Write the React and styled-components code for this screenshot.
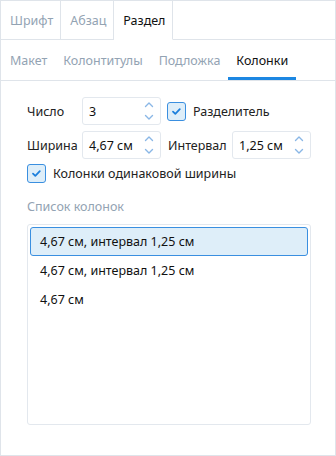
import React from "react";
import styled, { createGlobalStyle } from "styled-components";

const GlobalStyle = createGlobalStyle`
    html, body {
        margin: 0;
        padding: 0;
        background: #ffffff;
    }
    body {
        font-family: "Noto Sans", "Open Sans", sans-serif;
        font-size: 12px;
        color: #1a1a1a;
    }
`

const Frame = styled.div`
    width: 336px;
    height: 456px;
    box-sizing: border-box;
    border: 1px solid #dfe4ea;
    display: flex;
    flex-direction: column;
    background: #fff;
`

const TopTabs = styled.div`
    display: flex;
    height: 39px;
    flex-shrink: 0;
`

const TopTab = styled.div`
    padding: 0 7px 0 9px;
    display: flex;
    align-items: center;
    font-size: 12.5px;
    color: ${(p) => (p.active ? "#111" : "#93a3b3")};
    border-right: 1px solid #dfe4ea;
    border-bottom: 1px solid ${(p) => (p.active ? "transparent" : "#dfe4ea")};
`

const TabFiller = styled.div`
    flex: 1;
    border-bottom: 1px solid #dfe4ea;
`

const SubTabs = styled.div`
    display: flex;
    height: 41px;
    flex-shrink: 0;
    padding-left: 1px;
    border-bottom: 1px solid #dfe4ea;
    box-sizing: border-box;
`

const SubTab = styled.div`
    padding: 3px 8px 0 8px;
    display: flex;
    align-items: center;
    font-size: 12.5px;
    color: ${(p) => (p.active ? "#111" : "#93a3b3")};
    border-bottom: 3px solid ${(p) => (p.active ? "#1c87e2" : "transparent")};
`

const Content = styled.div`
    flex: 1;
    display: flex;
    flex-direction: column;
    padding: 16px 24px 0 26px;
`

const Row = styled.div`
    display: flex;
    align-items: center;
    height: 28px;
    flex-shrink: 0;
    margin-bottom: ${(p) => p.gap || 0}px;
`

const Label = styled.span`
    width: ${(p) => p.width || "auto"};
    font-size: 12.5px;
    color: #222;
    white-space: nowrap;
`

const SpinBox = styled.div`
    width: 79px;
    height: 28px;
    box-sizing: border-box;
    border: 1px solid #e3e8ee;
    border-radius: 3px;
    display: flex;
    align-items: center;
    justify-content: space-between;
    padding: 0 6px 0 6px;
    margin-right: ${(p) => p.mr || 0}px;
`

const SpinValue = styled.span`
    font-size: 12.5px;
    color: #111;
`

const Arrows = styled.svg`
    width: 10px;
    height: 22px;
`

const CheckRow = styled.label`
    display: flex;
    align-items: center;
    gap: 7px;
    font-size: 12.5px;
    color: #222;
`

const Box = styled.span`
    width: 19px;
    height: 19px;
    box-sizing: border-box;
    border: 1px solid #3a8fe0;
    border-radius: 3px;
    background: #deeef9;
    display: flex;
    align-items: center;
    justify-content: center;
`

const SectionTitle = styled.div`
    height: 18px;
    line-height: 18px;
    font-size: 12.5px;
    color: #93a3b3;
    margin-top: 11px;
    margin-bottom: 8px;
`

const ListBox = styled.div`
    height: 201px;
    flex-shrink: 0;
    box-sizing: border-box;
    border: 1px solid #e3e8ee;
    border-radius: 3px;
    padding: 2px;
    display: flex;
    flex-direction: column;
`

const ListItem = styled.div`
    height: 29px;
    box-sizing: border-box;
    display: flex;
    align-items: center;
    padding-left: 9px;
    font-size: 12.5px;
    color: #111;
    border-radius: 3px;
    border: 1px solid ${(p) => (p.selected ? "#3a8fe0" : "transparent")};
    background: ${(p) => (p.selected ? "#deeef9" : "transparent")};
`

const Spinner = () => (
    <Arrows viewBox="0 0 10 22">
        <path d="M1.5 6.5 L5 3 L8.5 6.5" fill="none" stroke="#8ab7e6" strokeWidth="1.4" strokeLinecap="round" strokeLinejoin="round" />
        <path d="M1.5 15.5 L5 19 L8.5 15.5" fill="none" stroke="#8ab7e6" strokeWidth="1.4" strokeLinecap="round" strokeLinejoin="round" />
    </Arrows>
)

const Check = () => (
    <Box>
        <svg width="11" height="9" viewBox="0 0 11 9">
            <path d="M2 4.6 L4.3 6.8 L8.8 2.2" fill="none" stroke="#1c7fdc" strokeWidth="1.8" strokeLinecap="round" strokeLinejoin="round" />
        </svg>
    </Box>
)

const App = () => {
    const columns = ["4,67 см, интервал 1,25 см", "4,67 см, интервал 1,25 см", "4,67 см"]

    return (
        <>
            <GlobalStyle />
            <Frame>
                <TopTabs>
                    <TopTab>Шрифт</TopTab>
                    <TopTab>Абзац</TopTab>
                    <TopTab active>Раздел</TopTab>
                    <TabFiller />
                </TopTabs>
                <SubTabs>
                    <SubTab>Макет</SubTab>
                    <SubTab>Колонтитулы</SubTab>
                    <SubTab>Подложка</SubTab>
                    <SubTab active>Колонки</SubTab>
                </SubTabs>
                <Content>
                    <Row gap={6}>
                        <Label width="55px">Число</Label>
                        <SpinBox mr={6}>
                            <SpinValue>3</SpinValue>
                            <Spinner />
                        </SpinBox>
                        <CheckRow>
                            <Check />
                            Разделитель
                        </CheckRow>
                    </Row>
                    <Row>
                        <Label width="55px">Ширина</Label>
                        <SpinBox mr={7}>
                            <SpinValue>4,67 см</SpinValue>
                            <Spinner />
                        </SpinBox>
                        <Label width="64px">Интервал</Label>
                        <SpinBox>
                            <SpinValue>1,25 см</SpinValue>
                            <Spinner />
                        </SpinBox>
                    </Row>
                    <Row>
                        <CheckRow>
                            <Check />
                            Колонки одинаковой ширины
                        </CheckRow>
                    </Row>
                    <SectionTitle>Список колонок</SectionTitle>
                    <ListBox>
                        {columns.map((c, i) => (
                            <ListItem key={i} selected={i === 0}>{c}</ListItem>
                        ))}
                    </ListBox>
                </Content>
            </Frame>
        </>
    )
}

export default App;
